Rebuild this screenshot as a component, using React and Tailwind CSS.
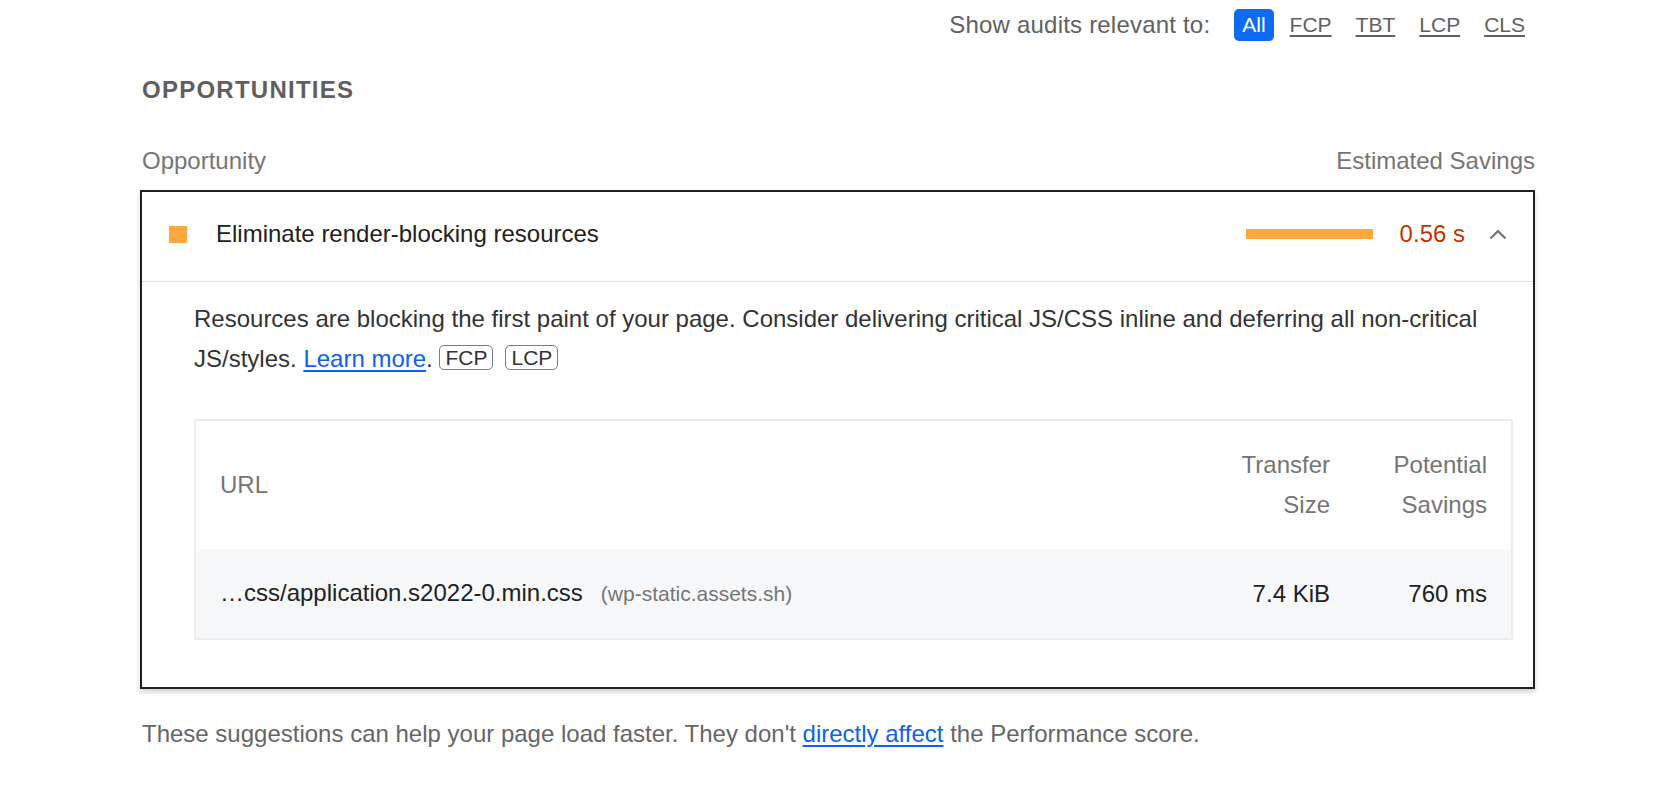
import React from "react";

const filters = ["FCP", "TBT", "LCP", "CLS"];

function Chevron() {
  return (
    <svg width="18" height="11" viewBox="0 0 18 11" fill="none" className="block">
      <polyline points="1.5,9.5 9,2 16.5,9.5" stroke="#757575" strokeWidth="2.2" />
    </svg>
  );
}

function Badge({ children }) {
  return (
    <span className="inline-block align-[2px] border-[1.5px] border-[#708090] rounded-[5px] px-[5px] text-[21px] leading-[23px] text-[#333]">
      {children}
    </span>
  );
}

export default function App() {
  return (
    <div className="min-h-screen bg-white font-['Liberation_Sans',Arial,sans-serif] text-[#212121]">
      <div className="ml-[140px] w-[1395px]">
        {/* filter row */}
        <div className="h-[50px] flex items-center justify-end pr-[2px]">
          <span className="text-[24px] leading-none text-[#616161] mr-[24px] tracking-[0.2px]">Show audits relevant to:</span>
          <div className="flex items-center gap-[8px]">
            <span className="bg-[#0b6bf2] text-white text-[21px] leading-[32px] px-[8px] rounded-[5px]">All</span>
            {filters.map((f) => (
              <span key={f} className="text-[21px] leading-[32px] px-[8px] text-[#616161] underline underline-offset-[3px]">
                {f}
              </span>
            ))}
          </div>
        </div>

        <div className="mt-[22px] text-[24px] leading-[36px] font-bold tracking-[1.25px] text-[#5f5f5f] pl-[2px]">
          OPPORTUNITIES
        </div>

        <div className="mt-[35px] flex justify-between text-[24px] leading-[36px] text-[#757575] pl-[2px]">
          <span>Opportunity</span>
          <span>Estimated Savings</span>
        </div>

        {/* expanded audit */}
        <div className="mt-[11px] border-2 border-[#212121] shadow-[0_3px_5px_rgba(0,0,0,0.18)]">
          <div className="flex items-center pl-[27px] pr-[26px] pt-[24px] pb-[29px] border-b border-[#e0e0e0]">
            <span className="w-[18px] h-[17px] bg-[#ffa83f]" />
            <span className="ml-[29px] flex-1 text-[24px] leading-[36px]">Eliminate render-blocking resources</span>
            <span className="w-[127px] h-[10px] bg-[#ffa83f]" />
            <span className="ml-[27px] text-[24px] leading-[36px] text-[#c33300]">0.56 s</span>
            <span className="ml-[24px]">
              <Chevron />
            </span>
          </div>

          <div className="pl-[52px] pr-[20px] pt-[17px] pb-[47px]">
            <p className="text-[24px] leading-[40px] text-[#333]">
              Resources are blocking the first paint of your page. Consider delivering critical JS/CSS inline and deferring all non-critical JS/styles.{" "}
              <span className="text-[#0b63ee] underline underline-offset-[3px]">Learn more</span>.{" "}
              <Badge>FCP</Badge>
              <span className="ml-[12px]"><Badge>LCP</Badge></span>
            </p>

            <div className="mt-[40px] border-2 border-[#ececec]">
              <div className="flex items-center py-[24px] text-[24px] leading-[40px] text-[#757575]">
                <div className="flex-1 pl-[24px]">URL</div>
                <div className="w-[110px] text-right">Transfer Size</div>
                <div className="w-[110px] ml-[47px] mr-[24px] text-right">Potential Savings</div>
              </div>
              <div className="flex items-center py-[24px] bg-[#f7f8fa] text-[24px] leading-[40px] text-[#212121]">
                <div className="flex-1 pl-[24px] flex items-baseline">
                  <span>…css/application.s2022-0.min.css</span>
                  <span className="ml-[18px] text-[21px] text-[#757575]">(wp-static.assets.sh)</span>
                </div>
                <div className="w-[110px] text-right">7.4 KiB</div>
                <div className="w-[110px] ml-[47px] mr-[24px] text-right">760 ms</div>
              </div>
            </div>
          </div>
        </div>

        <p className="mt-[25px] text-[24px] leading-[40px] text-[#666] pl-[2px]">
          These suggestions can help your page load faster. They don't{" "}
          <span className="text-[#0b63ee] underline underline-offset-[3px]">directly affect</span> the Performance score.
        </p>
      </div>
    </div>
  );
}
